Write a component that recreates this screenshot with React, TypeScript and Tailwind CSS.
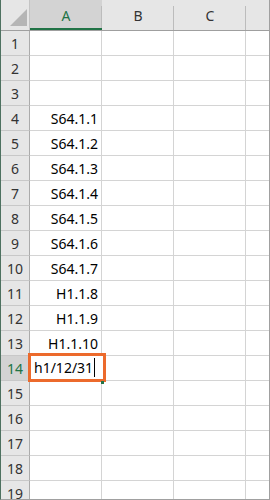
import React from "react";

const cols = ["A", "B", "C"];

const values: Record<number, string> = {
  4: "S64.1.1",
  5: "S64.1.2",
  6: "S64.1.3",
  7: "S64.1.4",
  8: "S64.1.5",
  9: "S64.1.6",
  10: "S64.1.7",
  11: "H1.1.8",
  12: "H1.1.9",
  13: "H1.1.10",
};

const rows = Array.from({ length: 19 }, (_, i) => i + 1);

const App = () => {
  return (
    <div
      className="relative h-[500px] w-[270px] overflow-hidden border-b border-l border-r border-b-[#a0a0a0] border-l-[#4e7160] border-r-[#a0a0a0] bg-white text-[14px] text-black"
      style={{ fontFamily: '"Noto Sans", "Liberation Sans", sans-serif' }}
    >
      {/* header row */}
      <div className="flex h-[31px] border-b border-[#9f9f9f] bg-[#e6e6e6]">
        <div className="relative w-[29px] shrink-0 border-r border-[#c4c4c4]">
          <svg className="absolute left-[9px] top-[9px]" width="17" height="17" viewBox="0 0 17 17">
            <polygon points="0,17 17,17 17,0" fill="#b5b5b5" />
          </svg>
        </div>
        {cols.map((c, i) => (
          <div
            key={c}
            className={`relative flex w-[72px] shrink-0 items-center justify-center ${
              i === 0 ? "bg-[#d3d3d3] text-[#217346]" : "text-[#333]"
            }`}
          >
            {c}
            <div className="absolute right-0 top-[6px] bottom-0 w-px bg-[#bcbcbc]" />
            {i === 0 && <div className="absolute bottom-0 left-0 right-0 h-[2px] bg-[#217346]" />}
          </div>
        ))}
        <div className="flex-1" />
      </div>

      {/* body rows */}
      {rows.map((r) => (
        <div key={r} className="flex h-[25px]">
          <div
            className={`flex w-[29px] shrink-0 items-center justify-center border-b border-r border-b-[#c8c8c8] ${
              r === 14
                ? "border-r-[#217346] bg-[#d3d3d3] text-[#217346]"
                : "border-r-[#ababab] bg-[#e6e6e6] text-[#333]"
            }`}
          >
            {r}
          </div>
          {cols.map((c) => (
            <div
              key={c}
              className="flex w-[72px] shrink-0 items-center justify-end border-b border-r border-[#d4d4d4] pr-[3px]"
            >
              {c === "A" ? values[r] : null}
            </div>
          ))}
          <div className="flex-1 border-b border-[#d4d4d4]" />
        </div>
      ))}

      {/* active cell A14 with text being edited */}
      <div className="absolute left-[27px] top-[353px] flex h-[29px] w-[78px] items-center border-[3px] border-[#ec6a2c] bg-white pl-[3px]">
        <span>h1/12/31</span>
        <span className="ml-[1px] h-[19px] w-px bg-black" />
      </div>
      <div className="absolute left-[100px] top-[381px] h-[3px] w-[3px] bg-[#217346]" />
    </div>
  );
};

export default App;
